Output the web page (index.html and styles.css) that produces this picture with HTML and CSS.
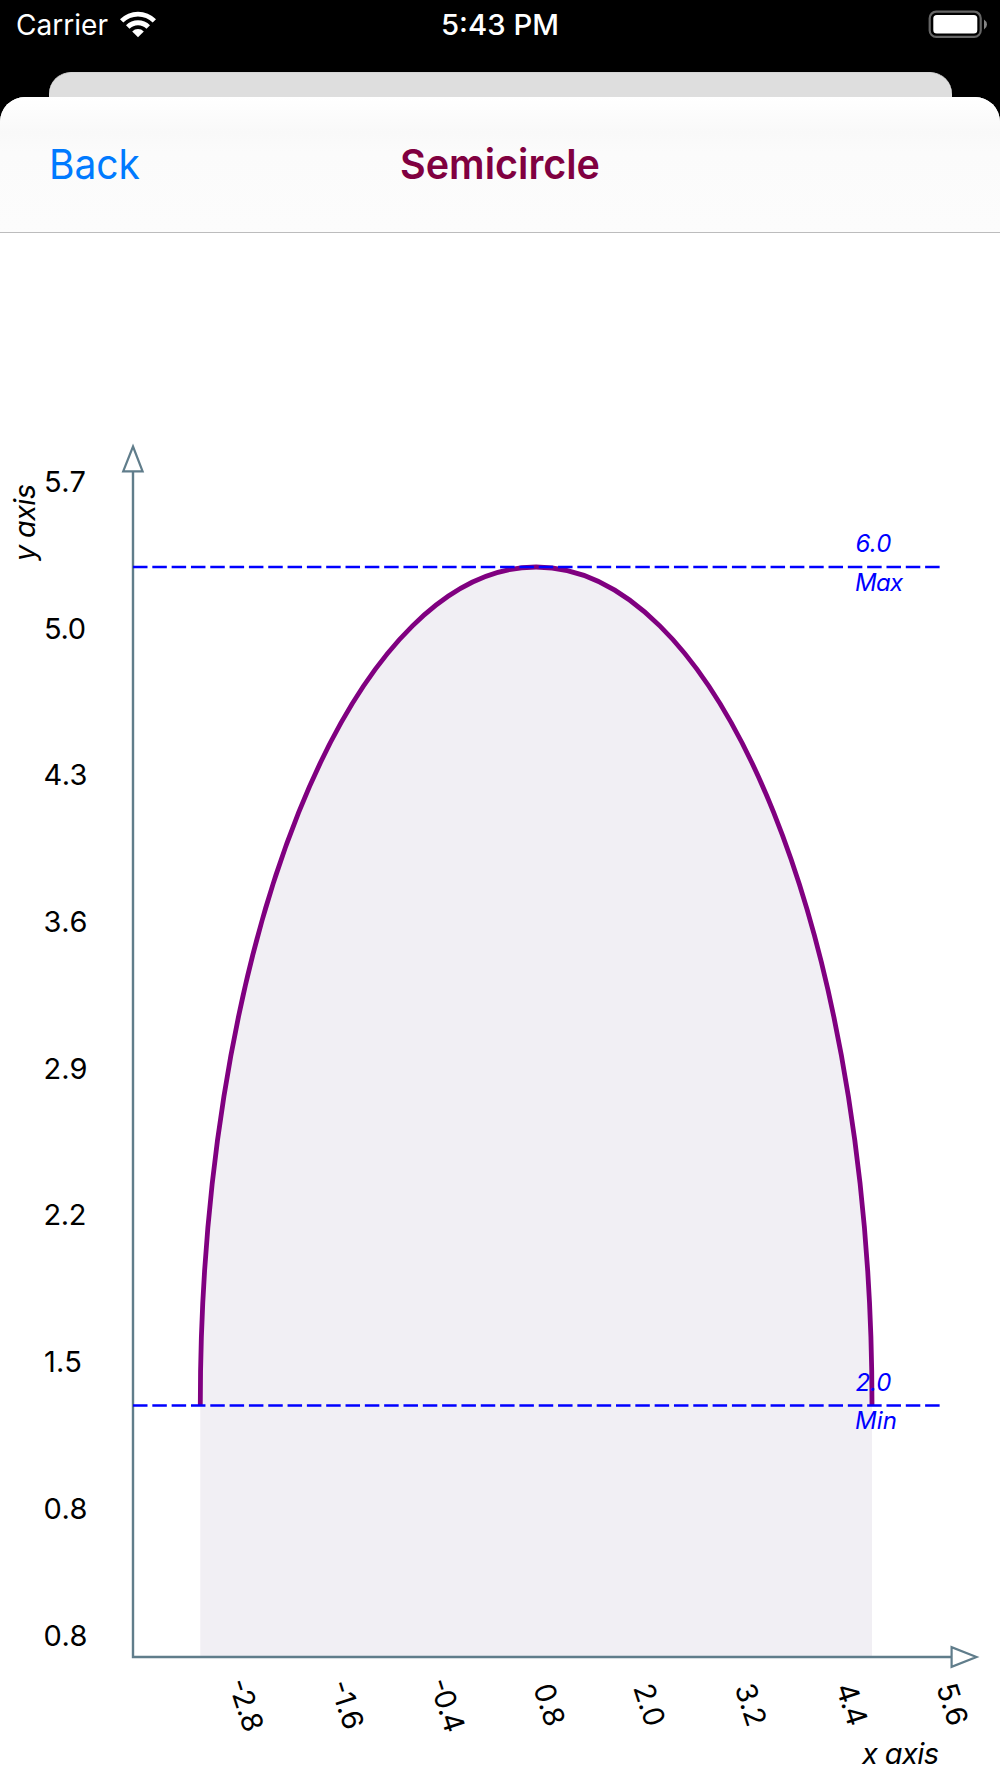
FILE: index.html
```html
<!DOCTYPE html>
<html lang="en">
<head>
    <meta charset="UTF-8">
    <meta name="viewport" content="width=device-width, initial-scale=1.0">
    <title>Semicircle</title>
    <link rel="stylesheet" href="styles.css">
</head>
<body>
    <div class="status-bar">
        <div class="carrier">
            <svg class="carrier-name" width="96" height="50"><text x="0" y="35" textLength="92" lengthAdjust="spacingAndGlyphs">Carrier</text></svg>
            <svg class="wifi" width="38" height="28" viewBox="0 0 38 28">
                <path d="M1 9.2 A25.5 25.5 0 0 1 37 9.2 L33.7 12.5 A20.8 20.8 0 0 0 4.3 12.5 Z"/>
                <path d="M7 15.2 A17 17 0 0 1 31 15.2 L27.5 18.7 A12 12 0 0 0 10.5 18.7 Z"/>
                <path d="M13.2 21.4 A8.2 8.2 0 0 1 24.8 21.4 L19 27.2 Z"/>
            </svg>
        </div>
        <svg class="time" width="120" height="50"><text x="1" y="35" textLength="118" lengthAdjust="spacingAndGlyphs">5:43 PM</text></svg>
        <svg class="battery" width="60" height="28" viewBox="0 0 60 28">
            <rect class="battery-case" x="1.7" y="1.7" width="51" height="25.2" rx="6.5"/>
            <rect class="battery-level" x="5.3" y="5.1" width="44" height="18.3" rx="3.5"/>
            <path class="battery-cap" d="M56 9.5 Q59 11.5 59 14.5 Q59 17.5 56 19.5 Z"/>
        </svg>
    </div>
    <div class="card-behind"></div>
    <div class="sheet">
        <div class="nav-bar">
            <svg class="back" width="100" height="60"><text x="1" y="41" textLength="91" lengthAdjust="spacingAndGlyphs">Back</text></svg>
            <svg class="title" width="220" height="60"><text x="10" y="41" textLength="200" lengthAdjust="spacingAndGlyphs">Semicircle</text></svg>
        </div>
        <svg class="chart" width="1000" height="1545" viewBox="0 233 1000 1545">
            <path class="area" d="M200.3 1656 V1405 A335.85 838 0 0 1 536.15 567 A335.85 838 0 0 1 872 1405 V1656 Z"/>

            <!-- axes -->
            <path class="axis" d="M133 472 V1657 H951"/>
            <path class="arrow" d="M133 446.5 L142.6 471.4 H123.2 Z"/>
            <path class="arrow" d="M976.5 1657 L951.6 1647.2 V1666.8 Z"/>

            <!-- curve -->
            <path class="curve" d="M200.3 1405 A335.85 838 0 0 1 536.15 567 A335.85 838 0 0 1 872 1405"/>

            <!-- max and min -->
            <path class="limit" d="M133 567 H940"/>
            <path class="limit" d="M133 1405.5 H940"/>
            <g class="limit-label">
                <text x="855.5" y="552" textLength="36">6.0</text>
                <text x="855" y="590.5" textLength="48">Max</text>
                <text x="855.5" y="1390.5" textLength="36">2.0</text>
                <text x="855" y="1429" textLength="42">Min</text>
            </g>

            <g class="tick">
                <text x="44" y="491.5" textLength="42">5.7</text>
                <text x="44" y="638.5" textLength="42">5.0</text>
                <text x="43.5" y="785" textLength="44">4.3</text>
                <text x="43.5" y="932" textLength="44">3.6</text>
                <text x="43.5" y="1078.5" textLength="44">2.9</text>
                <text x="43.5" y="1225" textLength="43">2.2</text>
                <text x="44" y="1372" textLength="38">1.5</text>
                <text x="43.5" y="1518.5" textLength="44">0.8</text>
                <text x="43.5" y="1645.5" textLength="44">0.8</text>
            </g>
            <g class="tick">
                <text transform="translate(228 1682.5) rotate(72)" textLength="54">-2.8</text>
                <text transform="translate(329.5 1684) rotate(72)" textLength="50">-1.6</text>
                <text transform="translate(429 1682) rotate(72)" textLength="55">-0.4</text>
                <text transform="translate(533 1687.5) rotate(72)" textLength="43">0.8</text>
                <text transform="translate(633 1687.5) rotate(72)" textLength="43">2.0</text>
                <text transform="translate(734.5 1687.5) rotate(72)" textLength="43">3.2</text>
                <text transform="translate(835.5 1687) rotate(72)" textLength="43">4.4</text>
                <text transform="translate(936 1687) rotate(72)" textLength="43">5.6</text>
            </g>
            <g class="axis-name">
                <text transform="translate(35 561) rotate(-90)" textLength="77">y axis</text>
                <text x="862" y="1764" textLength="77">x axis</text>
            </g>
        </svg>
    </div>
</body>
</html>
```
FILE: styles.css
```css
body {
    margin: 0;
    background-color: #000;
    font-family: Inter, "Liberation Sans", sans-serif;
    width: 1000px;
    height: 1778px;
    overflow: hidden;
}
svg {
    display: block;
}
.status-bar {
    display: grid;
    grid-template-columns: 1fr auto 1fr;
    height: 72px;
    padding: 0 12px;
    align-items: start;
    fill: #fff;
    font-size: 28.5px;
}
.carrier {
    display: flex;
    gap: 7px;
    margin-left: 4px;
}
.wifi {
    margin-top: 10px;
}
.time {
    font-weight: 500;
}
.battery {
    justify-self: end;
    margin-top: 10px;
}
.battery-case {
    fill: none;
    stroke: #666;
    stroke-width: 2.2;
}
.battery-cap {
    fill: #858585;
}
.card-behind {
    height: 24px;
    margin: 0 48px 0 49px;
    border-top: 1px solid #d5d5d5;
    border-radius: 22px 22px 0 0;
    background-color: #dedede;
}
.sheet {
    height: 1681px;
    border-radius: 25px 25px 0 0;
    background-color: #fff;
    overflow: hidden;
}
.nav-bar {
    display: grid;
    grid-template-columns: 1fr auto 1fr;
    align-items: center;
    height: 129px;
    padding: 6px 48px 0;
    border-bottom: 1px solid #bcbcbd;
    background: linear-gradient(#fff, #f9f9f9 35px, #fbfbfb 55px, #fcfcfc);
    font-size: 41px;
}
.back {
    fill: #007aff;
}
.title {
    fill: #800040;
    font-weight: 600;
}
.axis {
    fill: none;
    stroke: #607d8b;
    stroke-width: 2.4;
}
.arrow {
    fill: #fff;
    stroke: #607d8b;
    stroke-width: 2.2;
}
.area {
    fill: #f1eff4;
}
.curve {
    fill: none;
    stroke: #800080;
    stroke-width: 4.8;
}
.limit {
    stroke: #00f;
    stroke-width: 2.4;
    stroke-dasharray: 14.5 4.82;
}
.limit-label {
    fill: #00f;
    font-size: 24px;
    font-style: italic;
}
.tick, .axis-name {
    font-size: 29px;
}
.axis-name {
    font-style: italic;
}
```
